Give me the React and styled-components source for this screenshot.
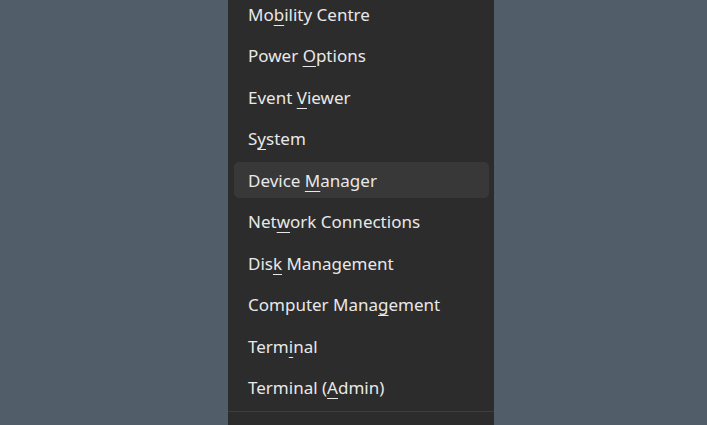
import React from "react";
import styled, { createGlobalStyle } from "styled-components";

const GlobalStyle = createGlobalStyle`
  html, body {
    margin: 0;
    padding: 0;
    height: 100%;
    overflow: hidden;
    background: #525d6a;
  }
`;

const items = [
  ["Mo", "b", "ility Centre"],
  ["Power ", "O", "ptions"],
  ["Event ", "V", "iewer"],
  ["S", "y", "stem"],
  ["Device ", "M", "anager", true],
  ["Net", "w", "ork Connections"],
  ["Dis", "k", " Management"],
  ["Computer Mana", "g", "ement"],
  ["Term", "i", "nal"],
  ["Terminal (", "A", "dmin)"],
];

export default function App() {
  return (
    <Page>
      <GlobalStyle />
      <Menu>
        <Group>
          {items.map(([pre, key, post, active]) => (
            <Item key={pre + key + post} active={active}>
              {pre}
              <Key>{key}</Key>
              {post}
            </Item>
          ))}
        </Group>
        <Separator />
        <Rest />
      </Menu>
    </Page>
  );
}

const Page = styled.div`
  display: flex;
  justify-content: flex-start;
  padding-left: 228px;
  height: 425px;
  overflow: hidden;
`;

const Menu = styled.div`
  width: 266px;
  margin-top: -4px;
  background: #2c2c2c;
  display: flex;
  flex-direction: column;
  font-family: "Noto Sans", "Open Sans", sans-serif;
`;

const Group = styled.div`
  display: flex;
  flex-direction: column;
  gap: 5.5px;
  padding: 0 5px 5px 6px;
`;

const Item = styled.div`
  height: 36px;
  display: flex;
  align-items: center;
  padding-left: 14px;
  border-radius: 5px;
  font-size: 17px;
  color: #e8e8e8;
  white-space: pre;
  background: ${(p) => (p.active ? "#383838" : "transparent")};
`;

const Key = styled.span`
  text-decoration: underline;
  text-underline-offset: 4px;
  text-decoration-thickness: 1px;
`;

const Separator = styled.div`
  height: 1px;
  background: #3d3d3d;
`;

const Rest = styled.div`
  height: 60px;
`;
